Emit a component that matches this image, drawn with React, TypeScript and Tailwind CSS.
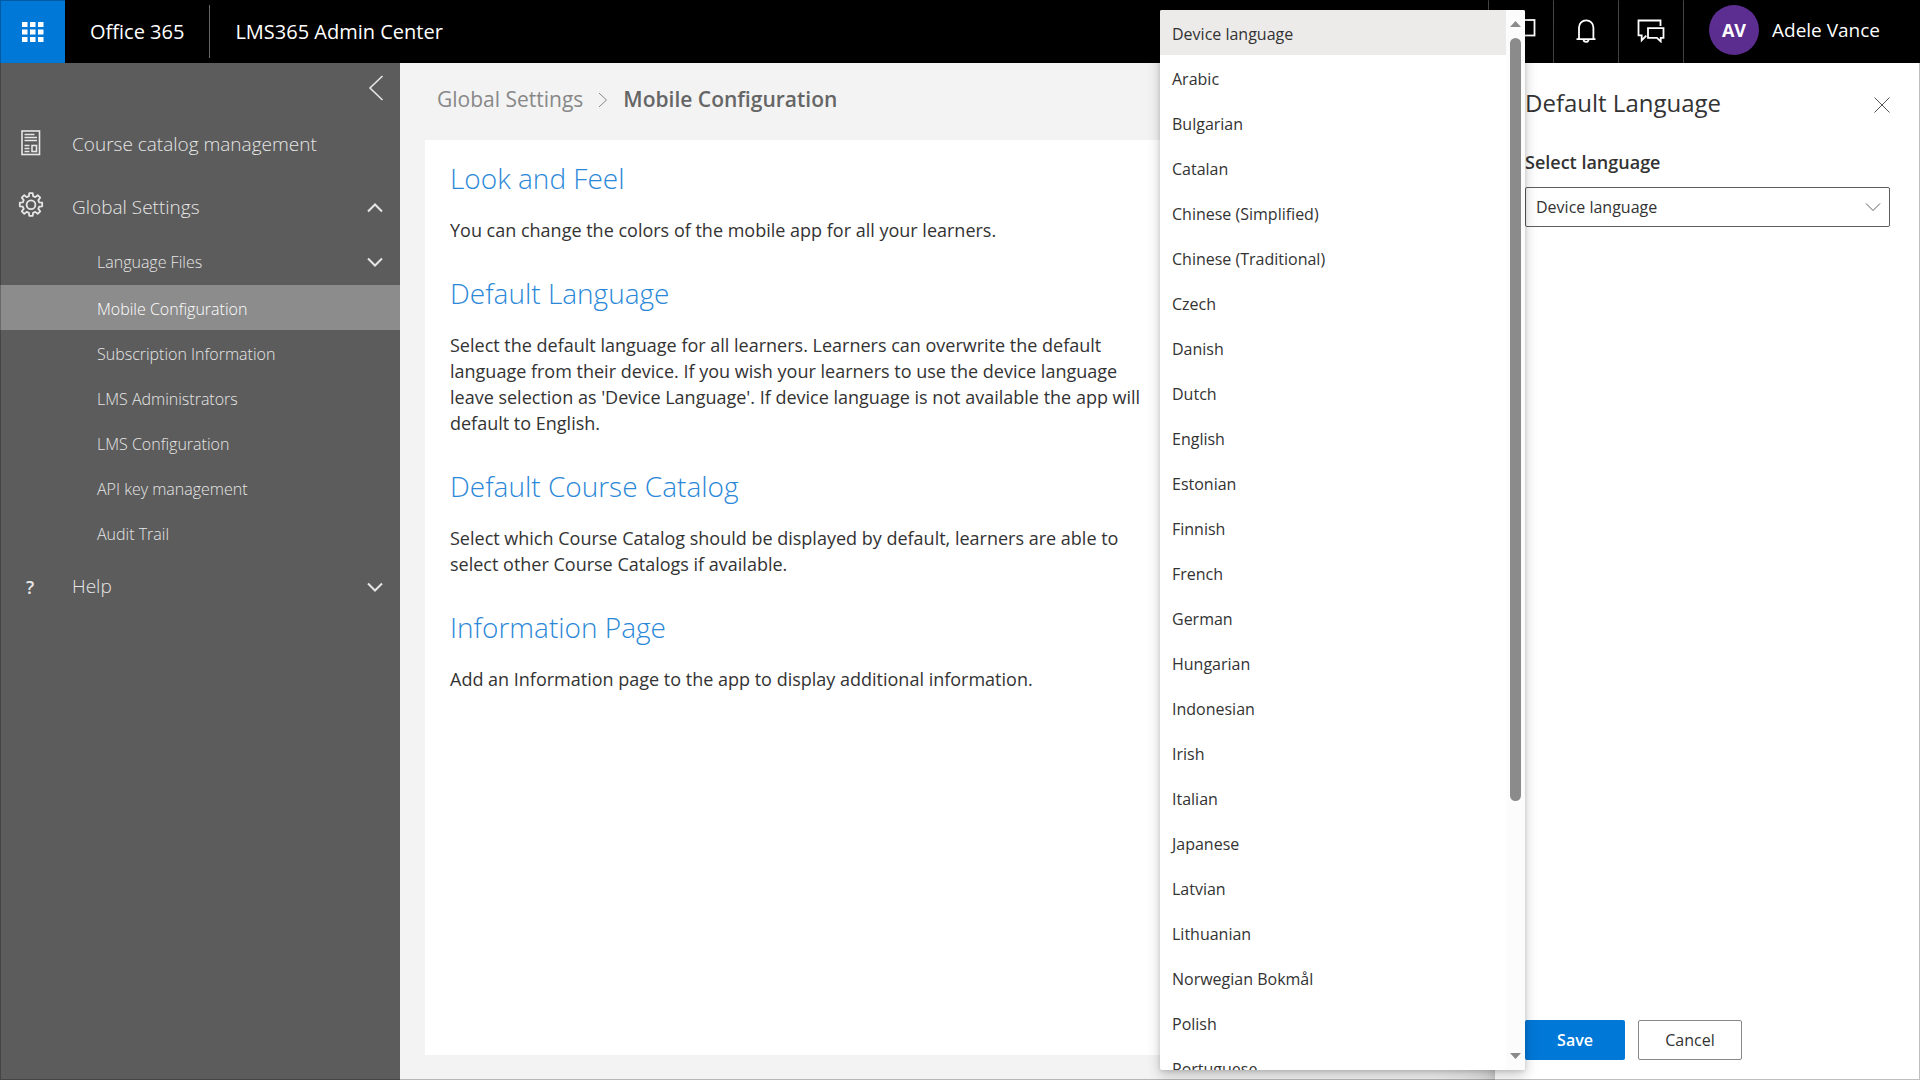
import React, { useState } from 'react';
import clsx from 'clsx';

const LANGUAGES = [
  'Device language', 'Arabic', 'Bulgarian', 'Catalan', 'Chinese (Simplified)', 'Chinese (Traditional)',
  'Czech', 'Danish', 'Dutch', 'English', 'Estonian', 'Finnish', 'French', 'German', 'Hungarian',
  'Indonesian', 'Irish', 'Italian', 'Japanese', 'Latvian', 'Lithuanian', 'Norwegian Bokmål', 'Polish',
  'Portuguese',
];

const SETTINGS_LINKS = [
  'Mobile Configuration',
  'Subscription Information',
  'LMS Administrators',
  'LMS Configuration',
  'API key management',
  'Audit Trail',
];

const SECTIONS = [
  {
    title: 'Look and Feel',
    text: 'You can change the colors of the mobile app for all your learners.',
  },
  {
    title: 'Default Language',
    text: "Select the default language for all learners. Learners can overwrite the default language from their device. If you wish your learners to use the device language leave selection as 'Device Language'. If device language is not available the app will default to English.",
  },
  {
    title: 'Default Course Catalog',
    text: 'Select which Course Catalog should be displayed by default, learners are able to select other Course Catalogs if available.',
  },
  {
    title: 'Information Page',
    text: 'Add an Information page to the app to display additional information.',
  },
];

const Chevron: React.FC<{ up?: boolean; className?: string }> = ({ up, className }) => (
  <svg width="16" height="10" viewBox="0 0 16 10" fill="none" stroke="currentColor" className={className}>
    <path d={up ? 'M1 8.5 8 1.5l7 7' : 'M1 1.5l7 7 7-7'} />
  </svg>
);

const CatalogIcon = () => (
  <svg width="20" height="26" viewBox="0 0 20 26" fill="none" stroke="currentColor">
    <rect x="1" y="1" width="17.5" height="23.5" strokeWidth="1.6" />
    <path d="M3.5 4.5h10M3.5 7.5h12.5M3.5 10.5h12.5M3.5 15.5h5M3.5 18.5h5M3.5 21.5h5" strokeWidth="1.6" />
    <rect x="11" y="15.5" width="4.5" height="6" strokeWidth="1.6" />
  </svg>
);

const GearIcon = () => (
  <svg width="26" height="26" viewBox="0 0 26 26" fill="none" stroke="currentColor" strokeWidth="1.8" strokeLinejoin="round">
    <path d="M10.9 4.2 11.3 1.2h3.4l.4 3 2.2.9L19.7 3.2l2.5 2.5-1.9 2.4.9 2.2 3 .4v3.600l-3 .4-.9 2.2 1.900 2.4-2.500 2.500-2.400-1.900-2.200.9-.4 3h-3.400l-.4-3-2.200-.9-2.400 1.900-2.500-2.500 1.900-2.400-.9-2.200-3-.4v-3.600l3-.4.900-2.200-1.900-2.400 2.500-2.500 2.400 1.900z" />
    <circle cx="13" cy="12.8" r="4.4" />
  </svg>
);

const WaffleIcon = () => (
  <svg width="22" height="20" viewBox="0 0 22 20" fill="currentColor">
    {[0, 8, 16].map((x) => [0, 7.5, 15].map((y) => <rect key={`${x}-${y}`} x={x} y={y} width="5.5" height="5" />))}
  </svg>
);

const ScreenIcon = () => (
  <svg width="30" height="24" viewBox="0 0 30 24" fill="none" stroke="currentColor" strokeWidth="1.8">
    <rect x="1" y="2" width="27.5" height="15.5" />
  </svg>
);

const BellIcon = () => (
  <svg width="20" height="24" viewBox="0 0 20 24" fill="none" stroke="currentColor" strokeWidth="1.8">
    <path d="M.5 20.2h19M3 20V8.5a7.2 7.2 0 0 1 14.400 0V20" />
    <path d="M7.6 20.6a2.500 2.300 0 0 0 5 0" />
  </svg>
);

const ChatIcon = () => (
  <svg width="28" height="24" viewBox="0 0 28 24" fill="none" stroke="currentColor" strokeWidth="1.8">
    <path d="M23.5 7V1.5H1.500v14.800h3.200v5l4.600-4.600" />
    <path d="M11 9.200h15.500v9.600h-2.800v3.600l-3.800-3.600H11z" />
  </svg>
);

export default function App() {
  const [language, setLanguage] = useState('Device language');

  return (
    <div className="relative flex min-h-screen flex-col bg-[#f3f3f3] font-['Open_Sans',sans-serif] text-[#333]">
      {/* Suite header */}
      <header className="flex h-[63px] items-center bg-black text-white">
        <button aria-label="App launcher" className="flex h-full w-[65px] items-center justify-center bg-[#0078d7]">
          <WaffleIcon />
        </button>
        <a href="#" className="px-[25px] text-xl">Office 365</a>
        <span className="h-[53px] w-px bg-[#666]" />
        <a href="#" className="px-[25px] text-xl">LMS365 Admin Center</a>
        <div className="ml-auto flex h-full">
          <button aria-label="Screen" className="flex w-[65px] items-center justify-center border-l border-[#444] pb-1">
            <ScreenIcon />
          </button>
          <button aria-label="Notifications" className="flex w-[65px] items-center justify-center border-l border-[#444] pb-0.5">
            <BellIcon />
          </button>
          <button aria-label="Feedback" className="flex w-[65px] items-center justify-center border-l border-[#444] pb-0.5">
            <ChatIcon />
          </button>
          <button className="flex w-[237px] items-center gap-[13px] border-l border-[#444] pb-[3px] pl-[25px] text-[19px]">
            <span className="flex size-[50px] items-center justify-center rounded-full bg-[#5c2e91] text-lg font-bold">AV</span>
            Adele Vance
          </button>
        </div>
      </header>

      <div className="flex flex-1">
        {/* Sidebar */}
        <nav className="w-[400px] shrink-0 bg-[#5c5c5c] text-[19px] font-light text-[#e6e6e6]">
          <div className="flex h-[50px] items-center justify-end pr-4">
            <button aria-label="Collapse navigation">
              <svg width="16" height="26" viewBox="0 0 16 26" fill="none" stroke="currentColor" strokeWidth="1.6">
                <path d="M14.5 1 2 13l12.500 12" />
              </svg>
            </button>
          </div>
          <a href="#" className="flex h-[63px] items-center">
            <span className="flex w-[72px] pb-1 pl-[21px]"><CatalogIcon /></span>
            Course catalog management
          </a>
          <button className="flex h-[63px] w-full items-center pr-[17px]">
            <span className="flex w-[72px] pb-1.5 pl-[18px]"><GearIcon /></span>
            Global Settings
            <Chevron up className="ml-auto stroke-2" />
          </button>
          <button className="flex h-[46px] w-full items-center pr-[17px] pl-[97px] text-base font-light">
            Language Files
            <Chevron className="ml-auto stroke-2" />
          </button>
          {SETTINGS_LINKS.map((link) => (
            <a
              key={link}
              href="#"
              className={clsx(
                'flex h-[45px] items-center pt-0.5 pl-[97px] text-base',
                link === 'Mobile Configuration' && 'bg-[#8c8c8c] text-white',
              )}
            >
              {link}
            </a>
          ))}
          <button className="flex h-[63px] w-full items-center pr-[17px]">
            <span className="w-[72px] pl-[26px] text-left text-lg font-semibold">?</span>
            Help
            <Chevron className="ml-auto stroke-2" />
          </button>
        </nav>

        {/* Content */}
        <main className="flex min-w-0 flex-1 flex-col pb-[25px] pl-[25px]">
          <div className="flex h-[77px] items-center pb-1 pl-3 text-[21px]">
            <a href="#" className="text-[#888]">Global Settings</a>
            <svg width="10" height="16" viewBox="0 0 10 16" fill="none" stroke="#888" className="mx-[15px]">
              <path d="M1 1l7.500 7L1 15" />
            </svg>
            <h1 className="font-semibold text-[#666]">Mobile Configuration</h1>
          </div>
          <div className="flex flex-1 flex-col gap-[29px] bg-white px-[25px] pt-[17px]">
            {SECTIONS.map((s) => (
              <section key={s.title} className="max-w-[700px]">
                <h2 className="mb-[18px] text-[28px] leading-[42px] font-light text-[#2b88d8]">{s.title}</h2>
                <p className="text-lg leading-[26px]">{s.text}</p>
              </section>
            ))}
          </div>
        </main>

        {/* Default language panel */}
        <aside className="flex w-[425px] shrink-0 flex-col bg-white px-[30px] py-5 shadow-[0_26px_58px_0_rgba(0,0,0,0.22),0_5px_14px_0_rgba(0,0,0,0.18)]">
          <div className="flex h-10 items-center justify-between">
            <h2 className="text-2xl font-medium">Default Language</h2>
            <button aria-label="Close" className="pt-1">
              <svg width="16" height="16" viewBox="0 0 16 16" fill="none" stroke="#555">
                <path d="M.5.500l15 15M15.500.500l-15 15" />
              </svg>
            </button>
          </div>
          <label htmlFor="language" className="mt-[26px] text-lg leading-[26px] font-semibold">Select language</label>
          <div className="relative mt-3">
            <select
              id="language"
              value={language}
              onChange={(e) => setLanguage(e.target.value)}
              className="h-10 w-full appearance-none rounded-xs border border-[#605e5c] bg-white pr-10 pl-[10px] text-base"
            >
              {LANGUAGES.map((l) => <option key={l}>{l}</option>)}
            </select>
            <Chevron className="pointer-events-none absolute top-[15px] right-[9px] text-[#605e5c]" />
          </div>
          <div className="mt-auto flex gap-[13px] text-base">
            <button className="h-10 w-[100px] rounded-xs bg-[#0078d7] font-semibold text-white">Save</button>
            <button className="h-10 w-[104px] rounded-xs border border-[#8a8886] bg-white">Cancel</button>
          </div>
        </aside>
      </div>

      {/* Open language menu */}
      <div className="absolute top-[10px] right-[395px] bottom-[10px] flex w-[365px] overflow-hidden rounded-xs bg-white shadow-[0_6px_14px_0_rgba(0,0,0,0.2),0_1px_4px_0_rgba(0,0,0,0.14)]">
        <ul role="listbox" aria-label="Select language" className="h-full flex-1 overflow-y-auto [scrollbar-width:none]">
          {LANGUAGES.map((l) => (
            <li key={l} role="option" aria-selected={l === language}>
              <button
                onClick={() => setLanguage(l)}
                className={clsx('h-[45px] w-full px-3 pt-0.5 text-left text-base', l === language && 'bg-[#edebe9]')}
              >
                {l}
              </button>
            </li>
          ))}
        </ul>
        <div className="flex w-[19px] flex-col items-center bg-[#fcfcfc] py-[11px] text-[#8b8b8b]">
          <svg width="11" height="6" viewBox="0 0 11 6" fill="currentColor"><path d="M5.500 0 11 6H0z" /></svg>
          <div className="my-[11px] flex w-[11px] flex-1 flex-col">
            <div className="h-[76%] rounded-full bg-[#8b8b8b]" />
          </div>
          <svg width="11" height="6" viewBox="0 0 11 6" fill="currentColor"><path d="M0 0h11L5.500 6z" /></svg>
        </div>
      </div>

      {/* Window frame */}
      <div className="pointer-events-none absolute inset-0 border border-black/25" />
    </div>
  );
}
